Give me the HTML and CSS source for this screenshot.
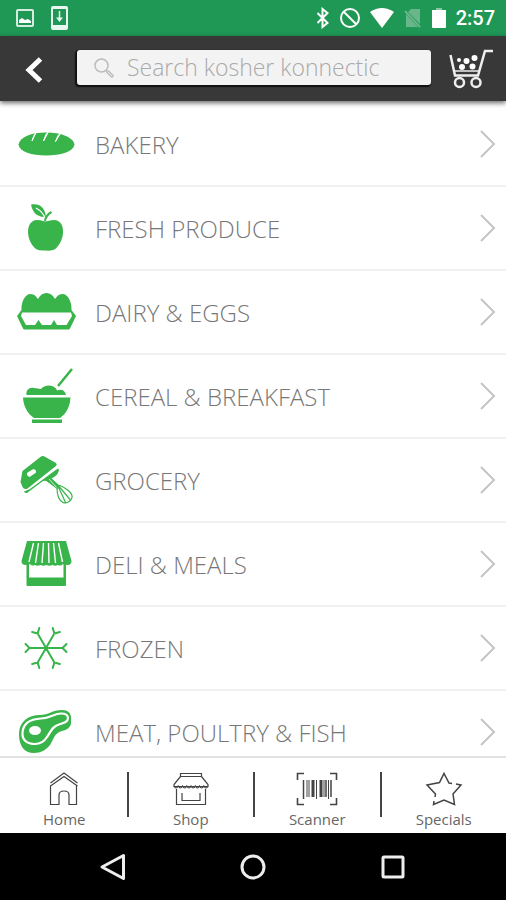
FILE: index.html
```html
<!DOCTYPE html>
<html lang="en">
<head>
  <meta charset="UTF-8">
  <meta name="viewport" content="width=device-width, initial-scale=1.0">
  <title>Kosher Konnectic</title>
  <link rel="stylesheet" href="styles.css">
</head>
<body>
  <div class="status-bar">
    <div class="status-left">
      <svg width="18" height="18" viewBox="0 0 18 18"><rect x="1" y="1" width="16" height="16" rx="1" fill="none" stroke="#d5ecdf" stroke-width="2"/><path d="M3 14v-3l3-2 3 2 3-1 3 2v2z" fill="#fff"/></svg>
      <svg width="17" height="24" viewBox="0 0 17 24"><path d="M0 2q0-2 2-2h13q2 0 2 2v20q0 2-2 2H2q-2 0-2-2zM2 3v16h13V3z" fill="#e9f6ef" fill-rule="evenodd"/><path d="M8.500 5v8" stroke="#e9f6ef" stroke-width="1.500"/><path d="M5 11.500h7L8.500 16z" fill="#e9f6ef"/></svg>
    </div>
    <div class="status-right">
      <svg width="14" height="22" viewBox="0 0 14 22"><path d="M1.500 6l10 10-5 4V2l5 4-10 10" fill="none" stroke="#fff" stroke-width="2"/></svg>
      <svg width="20" height="20" viewBox="0 0 20 20"><circle cx="10" cy="10" r="9" fill="none" stroke="#fff" stroke-width="2"/><path d="M4 4l12 12" stroke="#fff" stroke-width="2"/></svg>
      <svg width="24" height="20" viewBox="0 0 24 20"><path d="M0 4q12-8 24 0L12 20z" fill="#fff"/></svg>
      <svg width="18" height="20" viewBox="0 0 18 20"><path d="M7 1h9v15L4 4zM2 6l12 13H2z" fill="#69b68a"/><path d="M1 3l15 16" stroke="#69b68a" stroke-width="2"/></svg>
      <svg width="14" height="20" viewBox="0 0 14 20"><path d="M4 0h6v2H4z" fill="#86c7a2"/><path d="M0 2h14v17q0 1-1 1H1q-1 0-1-1z" fill="#fff"/></svg>
      <span class="clock">2:57</span>
    </div>
  </div>

  <header class="top-bar">
    <button class="icon-button back" type="button" aria-label="Back">
      <svg width="18" height="26" viewBox="0 0 18 26"><path d="M15.500 2L4 13l11.500 11" fill="none" stroke="#fff" stroke-width="5"/></svg>
    </button>
    <form class="search">
      <svg width="20" height="20" viewBox="0 0 20 20" fill="none" stroke="#bcbcbc"><circle cx="7.500" cy="7.500" r="6.500" stroke-width="1.500"/><path d="M12 12l2 2" stroke-width="1.500"/><path d="M14 14l4 4" stroke-width="3.500" stroke-linecap="round"/><path d="M14 14l4 4" stroke="#f3f3f3" stroke-linecap="round"/></svg>
      <input class="search-input" type="text" placeholder="Search kosher konnectic" aria-label="Search">
    </form>
    <button class="icon-button" type="button" aria-label="Cart">
      <svg width="44" height="40" viewBox="0 0 44 40" fill="none" stroke="#eee"><path d="M1.500 6L6 26.500h23L36 2h8" stroke-width="2.500"/><path d="M6 22h24" stroke-width="1.500"/><circle cx="10.500" cy="33.500" r="4.500" stroke-width="2.500"/><circle cx="27" cy="33.500" r="4.500" stroke-width="2.500"/><g fill="#fff" stroke="none"><circle cx="10" cy="11" r="2"/><circle cx="17.500" cy="12" r="3"/><circle cx="25.500" cy="9" r="3"/><circle cx="13" cy="18" r="3"/><circle cx="23.500" cy="17.500" r="3"/></g></svg>
    </button>
  </header>

  <main class="categories">
    <a class="category" href="#">
      <svg class="category-icon" viewBox="0 0 60 60"><path d="M2.500 30.500C4 23 15 18.500 30 18.500s27 4.500 28.500 12C57 38 45 41.500 30 41.500S4 38 2.500 30.500z" fill="#39b44a"/><path d="M21.500 17q-4.500 4-5.500 10 2.500-5 3.500-7.500zM34 16q-5 4-6.500 11 3-5 4.500-8.500zM46.500 17q-5.500 4-7 10.500 3-5 5-8z" fill="#fff" stroke="#fff" stroke-width="1"/></svg>
      <span class="category-name">BAKERY</span>
      <svg class="chevron" viewBox="0 0 16 28"><path d="M1 1l13 13L1 27"/></svg>
    </a>
    <a class="category" href="#">
      <svg class="category-icon" viewBox="0 0 60 60"><path d="M21 22q4 0 6 1 2 .8 5 0 3-1 7-1c6 1 8.500 6 8 13-.5 8-5 14-8.500 16.500Q36 53 29.500 52.500 23 53 20 51C16 48 12 41 12 34s3-11.500 9-12z" fill="#39b44a"/><path d="M15 6.500c8-1.500 14 2 15 13-8-1-13-3-15-13z" fill="#39b44a"/><path d="M20 10q7 4 9 10" fill="none" stroke="#fff" stroke-width="1.200"/><path d="M29 23q1-6 6.500-9" fill="none" stroke="#39b44a" stroke-width="2"/></svg>
      <span class="category-name">FRESH PRODUCE</span>
      <svg class="chevron" viewBox="0 0 16 28"><path d="M1 1l13 13L1 27"/></svg>
    </a>
    <a class="category" href="#">
      <svg class="category-icon" viewBox="0 0 60 60"><path d="M5.500 28C5 20 9 12 14.500 12c4 0 6 3 7.500 5 2-4 5-6 8.500-6s6.500 2 8.500 6c1.500-2 3.500-5 7.500-5C52 12 56 20 55.500 28L60 34l-6 12.500q-.5 1-1.500 1h-44q-1 0-1.500-1L1 34z" fill="#39b44a"/><path d="M6 30.500h49l1 3.500-5.500 9H41l-3-5-3 5h-9l-3.500-5L19 43h-9L5 34z" fill="#fff"/></svg>
      <span class="category-name">DAIRY &amp; EGGS</span>
      <svg class="chevron" viewBox="0 0 16 28"><path d="M1 1l13 13L1 27"/></svg>
    </a>
    <a class="category" href="#">
      <svg class="category-icon" viewBox="0 0 60 60" fill="#39b44a"><path d="M10.500 29c-1-5 3-8 7.500-7 3 0 5 1 7 1 3-4 11-5 15-.5l1 2c5-2 8 0 9 4.500zM7 31.500h47.500C54 41 50 48 44 52H18C12 48 7.500 41 7 31.500zM16 53.500h30V57H16z"/><path d="M56 3L42 20" stroke="#39b44a" stroke-width="2.500"/></svg>
      <span class="category-name">CEREAL &amp; BREAKFAST</span>
      <svg class="chevron" viewBox="0 0 16 28"><path d="M1 1l13 13L1 27"/></svg>
    </a>
    <a class="category" href="#">
      <svg class="category-icon" viewBox="0 0 60 60"><path d="M25 6.500q1.500-.8 3-.2L40 13q1.500 1.500 0 3L11.500 38.500Q8 40 6.500 37L4.500 32 6.500 21z" fill="#39b44a"/><path d="M11.500 23l6-3.500q3 .5 2 3l-6 4q-3-1-2-3.500z" fill="#fff" stroke="#fff" stroke-width="1"/><path d="M8 41.500L14 39l25-18.500 3-2 1 1.500q-1 5-5 7l-6 3.500-5 .5L11 43q-2 .5-3-1.500z" fill="#39b44a"/><path d="M29 30l5-3 10 9-3 3z" fill="#39b44a"/><path d="M33 29l8 9" stroke="#fff" stroke-width=".8"/><path d="M41 37.500c0 7 2 13 6 15 3 1.500 8-1 9-5C57 43 50 38 44 35.500zM42.500 37.500q4 8 7 15M43 36.500q6 7 11 13" fill="none" stroke="#39b44a" stroke-width="1.200"/></svg>
      <span class="category-name">GROCERY</span>
      <svg class="chevron" viewBox="0 0 16 28"><path d="M1 1l13 13L1 27"/></svg>
    </a>
    <a class="category" href="#">
      <svg class="category-icon" viewBox="0 0 60 60"><path d="M11 7h39l5.500 20q0 4-4 4-3 0-4.500-1-2 2.500-5 1-3 1.500-5.500 0-3 1.500-6 0-3 1.500-6 0-3 1.500-5.500 0-3 1.500-5-1-1.500 1-4.500 1-4 0-4-4z" fill="#39b44a"/><path d="M17.500 9l-4.500 19M22.500 9l-3 20M27.500 9L26 29M32.500 9l.5 20M37.500 9l2 20M42.500 9l4 19" stroke="#fff" stroke-width="1.400"/><path d="M10.500 30h2.500v13.500h34.500V30H50v21q0 1-1 1H11.500q-1 0-1-1z" fill="#39b44a"/></svg>
      <span class="category-name">DELI &amp; MEALS</span>
      <svg class="chevron" viewBox="0 0 16 28"><path d="M1 1l13 13L1 27"/></svg>
    </a>
    <a class="category" href="#">
      <svg class="category-icon" viewBox="0 0 60 60" fill="none" stroke="#39b44a" stroke-width="2" stroke-linecap="round"><path d="M13 30h34M21.500 15.300l17 29.400M38.500 15.300l-17 29.400M9.500 26l4 4-4 4M50.500 26l-4 4 4 4M23.300 10l-1.700 5.500-5.500-1.500M36.700 10l1.700 5.500 5.500-1.500M23.300 50l-1.700-5.500-5.500 1.500M36.700 50l1.700-5.500 5.500 1.500"/></svg>
      <span class="category-name">FROZEN</span>
      <svg class="chevron" viewBox="0 0 16 28"><path d="M1 1l13 13L1 27"/></svg>
    </a>
    <a class="category" href="#">
      <svg class="category-icon" viewBox="0 0 60 60"><path d="M3 32C3 20 12 13 24 13c9 0 12-5 22-5 6 0 9 3 9 8v5c0 4-4 7-9 8-8 2-8 8-12 14-4 5-9 8-16 8C8 51 3 44 3 32z" fill="#39b44a"/><path d="M6.500 31C7 21 15 17 25 16.500c9 0 13-5 20-5 5 0 7 2 7 4.500 0 4-4 5-9 6.500-7 2-8 7-12 12.500-3 5-7 7-12 7-8 0-13-4-12.500-11z" fill="none" stroke="#fff" stroke-width="2.200"/><ellipse cx="19" cy="28.500" rx="6" ry="4.500" fill="#fff"/></svg>
      <span class="category-name">MEAT, POULTRY &amp; FISH</span>
      <svg class="chevron" viewBox="0 0 16 28"><path d="M1 1l13 13L1 27"/></svg>
    </a>
  </main>

  <nav class="tab-bar">
    <a class="tab" href="#">
      <svg class="tab-icon" viewBox="0 0 44 36"><path d="M8.500 14.500V33.500H17V24q0-4 5-4t5 4v9.500h7.500v-19M8.500 12L22 2l13.500 10M8.500 15L22 5.500 35.500 15"/></svg>
      <span>Home</span>
    </a>
    <a class="tab" href="#">
      <svg class="tab-icon" viewBox="0 0 44 36"><path d="M11.500 2.500h21v3h-21zM11.500 5.500L5 13.500v2h34v-2l-6.500-8M7.500 18v15.500h29V18M13 22v7.500h18V22"/><path d="M5 15q2 4 4.200 0 2.200 4 4.300 0 2.200 4 4.300 0 2.200 4 4.200 0 2.200 4 4.300 0 2.200 4 4.200 0 2.200 4 4.300 0 2.200 4 4.200 0"/></svg>
      <span>Shop</span>
    </a>
    <a class="tab" href="#">
      <svg class="tab-icon" viewBox="0 0 44 36"><path d="M2.500 9V2.500H9M35 2.500h6.500V9M2.500 27v6.500H9M35 33.500h6.500V27" stroke-width="1.600"/><path d="M8.500 9v19M31 9v17M36 9v17" stroke-width="1.500"/><path d="M18 9v17M26 9v17" stroke-width="3"/><path d="M12 9v17M14 9v17M21.500 9v19M29 9v17M33.500 9v19" stroke-width="1"/></svg>
      <span>Scanner</span>
    </a>
    <a class="tab" href="#">
      <svg class="tab-icon" viewBox="0 0 44 36"><path d="M30 12.500l-3-.5L22 2.500 17.500 11.500 5 14l8.500 9-.5 3M12 30l-.5 3.500L22 29l10.500 4.500L31 23l8-9-5-1" stroke-width="1.500"/></svg>
      <span>Specials</span>
    </a>
  </nav>

  <div class="system-bar">
    <button class="icon-button" type="button" aria-label="System back">
      <svg width="28" height="28" viewBox="0 0 28 28"><path d="M24.500 2.500v23L3 14z" fill="none" stroke="#eee" stroke-width="3" stroke-linejoin="round"/></svg>
    </button>
    <button class="icon-button" type="button" aria-label="System home">
      <svg width="28" height="28" viewBox="0 0 28 28"><circle cx="14" cy="14" r="11" fill="none" stroke="#eee" stroke-width="3"/></svg>
    </button>
    <button class="icon-button" type="button" aria-label="Recent apps">
      <svg width="28" height="28" viewBox="0 0 28 28"><rect x="4" y="4" width="20" height="20" rx="1" fill="none" stroke="#eee" stroke-width="3"/></svg>
    </button>
  </div>
</body>
</html>
```
FILE: styles.css
```css
* {
  box-sizing: border-box;
}

body {
  display: flex;
  flex-direction: column;
  height: 100vh;
  margin: 0;
  font-family: "Open Sans", "Noto Sans", sans-serif;
  background-color: #fff;
}

svg {
  display: block;
  flex-shrink: 0;
}

a {
  color: inherit;
  text-decoration: none;
}

.icon-button {
  padding: 0;
  border: none;
  background: none;
  cursor: pointer;
}

/* android status bar */
.status-bar {
  display: flex;
  flex-shrink: 0;
  justify-content: space-between;
  align-items: center;
  height: 36px;
  padding: 0 11px 0 16px;
  background-color: #1f9755;
}

.status-left {
  display: flex;
  align-items: center;
  gap: 17px;
}

.status-right {
  display: flex;
  align-items: center;
  gap: 10px;
}

.clock {
  font-family: Roboto, sans-serif;
  font-size: 20px;
  font-weight: 500;
  color: #fff;
}

/* header with search */
.top-bar {
  position: relative;
  display: flex;
  flex-shrink: 0;
  align-items: center;
  height: 65px;
  padding: 0 13px 0 25px;
  background-color: #383838;
  box-shadow: 0 2px 5px rgba(0, 0, 0, 0.6);
}

.back {
  margin-right: 34px;
  padding-top: 3px;
}

.search {
  display: flex;
  flex: 1;
  align-items: center;
  height: 35px;
  margin: 0 18px 2px 0;
  padding-left: 17px;
  border-radius: 3px;
  background-color: #f3f3f3;
  box-shadow: -1px 1px 1px 1px #111;
}

.search-input {
  flex: 1;
  min-width: 0;
  padding: 0 0 2px 13px;
  border: none;
  outline: none;
  background: none;
  font-family: inherit;
  font-size: 23px;
  font-weight: 300;
  color: #555;
}

.search-input::placeholder {
  color: #aaa;
  opacity: 1;
}

/* category list */
.categories {
  flex: 1;
  min-height: 0;
  padding-top: 2px;
  overflow-y: auto;
  scrollbar-width: none;
}

.category {
  display: flex;
  align-items: center;
  height: 84px;
  padding: 0 10px 0 16px;
  border-bottom: 2px solid #f1f1f1;
}

.category-icon {
  width: 60px;
  height: 60px;
}

.category-name {
  flex: 1;
  margin-left: 19px;
  font-size: 24px;
  font-weight: 300;
  color: #777;
}

.chevron {
  width: 16px;
  height: 28px;
  fill: none;
  stroke: #c4c4c4;
  stroke-width: 2;
}

/* bottom tabs */
.tab-bar {
  display: flex;
  flex-shrink: 0;
  height: 77px;
  border-top: 2px solid #e2e2e2;
  background-color: #fff;
}

.tab {
  display: flex;
  flex: 1;
  flex-direction: column;
  align-items: center;
  gap: 1px;
  padding: 13px 0 0 2px;
  font-size: 15px;
  line-height: 22px;
  color: #666;
}

.tab + .tab {
  background: linear-gradient(#444, #444) left 14px / 2px 45px no-repeat;
}

.tab-icon {
  width: 44px;
  height: 36px;
  fill: none;
  stroke: #444;
  stroke-width: 1.2;
}

/* android navigation */
.system-bar {
  display: flex;
  flex-shrink: 0;
  justify-content: center;
  align-items: center;
  gap: 112px;
  height: 67px;
  background-color: #000;
}
```
